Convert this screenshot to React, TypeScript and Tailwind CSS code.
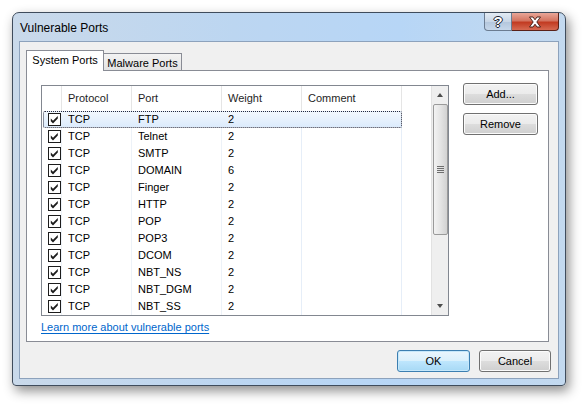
import React from "react";

const rows: [string, string][] = [
  ["FTP", "2"],
  ["Telnet", "2"],
  ["SMTP", "2"],
  ["DOMAIN", "6"],
  ["Finger", "2"],
  ["HTTP", "2"],
  ["POP", "2"],
  ["POP3", "2"],
  ["DCOM", "2"],
  ["NBT_NS", "2"],
  ["NBT_DGM", "2"],
  ["NBT_SS", "2"],
];

function Check() {
  return (
    <svg width="13" height="13" viewBox="0 0 13 13" className="shrink-0">
      <rect x="0.5" y="0.5" width="12" height="12" fill="#fff" stroke="#1c1c1c" />
      <path d="M2.8 5.6 L5 7.8 L9.8 3 L9.8 5.6 L5 10.4 L2.8 8.2 Z" fill="#1c1c1c" />
    </svg>
  );
}

function Btn({ children, primary, className = "" }: { children: React.ReactNode; primary?: boolean; className?: string }) {
  return (
    <button
      className={
        "h-[22px] rounded-[3px] border text-[11px] text-black " +
        (primary
          ? "border-[#3c7fb1] bg-[linear-gradient(#eaf6fd_0%,#d9f0fc_50%,#bee6fd_51%,#a7d9f5_100%)] shadow-[inset_0_0_0_1px_#c6e8fb] "
          : "border-[#707070] bg-[linear-gradient(#f2f2f2_0%,#ebebeb_50%,#dddddd_51%,#cfcfcf_100%)] shadow-[inset_0_0_0_1px_#fbfbfb] ") +
        className
      }
    >
      {children}
    </button>
  );
}

export default function App() {
  return (
    <div className="w-[586px] h-[406px] bg-white pt-[12px] pl-[12px] font-['Liberation_Sans',Arial,sans-serif] text-[11px] text-black overflow-hidden">
      {/* window */}
      <div className="w-[554px] h-[374px] flex flex-col rounded-t-[7px] rounded-b-[4px] border border-[#3f4c5c] bg-[linear-gradient(90deg,#c9d9ea_0%,#bcd6f1_40%,#b7d6f6_70%,#c3d9ef_100%)] shadow-[3px_5px_12px_rgba(0,0,0,0.45)]">
        {/* title bar */}
        <div className="h-[28px] flex items-start">
          <div className="pl-[7px] pt-[8px] text-[12px] leading-[14px]">Vulnerable Ports</div>
          <div className="ml-auto mr-[6px] flex">
            <div className="w-[28px] h-[18px] rounded-bl-[4px] border border-t-0 border-[#6b7c91] bg-[linear-gradient(#e3ebf4_0%,#c8d6e6_50%,#b3c6dc_51%,#c6d7ea_100%)] flex items-center justify-center">
              <span className="text-white font-bold text-[15px] leading-none [text-shadow:1px_0_0_#1a2230,-1px_0_0_#1a2230,0_1px_0_#1a2230,0_-1px_0_#1a2230]">?</span>
            </div>
            <div className="w-[47px] h-[18px] rounded-br-[4px] border border-t-0 border-l-0 border-[#5a2118] bg-[linear-gradient(#e8a698_0%,#d47561_45%,#c23b22_55%,#d66a52_100%)] flex items-center justify-center">
              <svg width="14" height="12" viewBox="0 0 14 12">
                <path d="M1.5 1 L5 1 L7 3.8 L9 1 L12.5 1 L8.8 6 L12.5 11 L9 11 L7 8.2 L5 11 L1.5 11 L5.2 6 Z" fill="#fff" stroke="#3b1610" strokeWidth="0.9" />
              </svg>
            </div>
          </div>
        </div>
        {/* client */}
        <div className="flex-1 px-[6px] pb-[6px] flex">
          <div className="flex-1 border border-[#8da2bc] bg-[#f0f0f0] flex flex-col">
            {/* tabs */}
            <div className="pt-[6px] pl-[6px] flex items-end h-[28px]">
              <div className="relative z-10 h-[21px] w-[78px] border border-b-0 border-[#898c95] bg-white flex items-start justify-center pt-[1px] -mb-[1px]">
                System Ports
              </div>
              <div className="h-[17px] w-[78px] border border-l-0 border-b-0 border-[#898c95] bg-[linear-gradient(#f3f3f3,#e3e3e3)] flex items-start justify-center pt-[1px]">
                Malware Ports
              </div>
            </div>
            {/* panel */}
            <div className="ml-[6px] mr-[9px] h-[272px] border border-[#898c95] bg-white pt-[14px] pl-[14px] flex flex-col">
              <div className="flex">
                {/* list view */}
                <div className="w-[408px] h-[231px] border border-[#828790] flex">
                  <div className="w-[389px] flex flex-col">
                    <div className="h-[25px] flex items-center text-[#1e1e1e]">
                      <div className="w-[20px] h-full border-r border-[#e5e5e5]" />
                      <div className="w-[70px] h-full border-r border-[#e5e5e5] pl-[6px] flex items-center">Protocol</div>
                      <div className="w-[90px] h-full border-r border-[#e5e5e5] pl-[6px] flex items-center">Port</div>
                      <div className="w-[80px] h-full border-r border-[#e5e5e5] pl-[6px] flex items-center">Weight</div>
                      <div className="w-[100px] h-full border-r border-[#e5e5e5] pl-[6px] flex items-center">Comment</div>
                      <div className="flex-1 h-full" />
                    </div>
                    <div className="flex-1 overflow-hidden relative">
                      {/* column gridlines */}
                      <div className="absolute inset-0 flex pointer-events-none">
                        <div className="w-[20px] border-r border-[#edf2f8]" />
                        <div className="w-[70px] border-r border-[#edf2f8]" />
                        <div className="w-[90px] border-r border-[#edf2f8]" />
                        <div className="w-[80px] border-r border-[#e6eef8]" />
                        <div className="w-[100px] border-r border-[#e6eef8]" />
                      </div>
                      {rows.map(([port, w], i) => (
                        <div key={port} className="relative h-[17px] flex items-center">
                          {i === 0 && (
                            <div className="absolute left-[1px] top-0 w-[359px] h-[17px] rounded-[2px] border border-dotted border-[#2a2a3a] bg-[linear-gradient(#f2f8fe,#dcebfc)]" />
                          )}
                          <div className="relative w-[20px] flex justify-end pr-[1px]">
                            <Check />
                          </div>
                          <div className="relative w-[70px] pl-[6px]">TCP</div>
                          <div className="relative w-[90px] pl-[6px]">{port}</div>
                          <div className="relative w-[80px] pl-[6px]">{w}</div>
                        </div>
                      ))}
                    </div>
                  </div>
                  {/* scrollbar */}
                  <div className="w-[17px] bg-[#efefef] border-l border-[#e2e2e2] flex flex-col items-center">
                    <div className="h-[18px] flex items-center justify-center">
                      <div className="w-0 h-0 border-l-[3.5px] border-r-[3.5px] border-b-[4px] border-l-transparent border-r-transparent border-b-[#4d4d4d]" />
                    </div>
                    <div className="w-[15px] h-[131px] rounded-[2px] border border-[#9a9a9a] bg-[linear-gradient(90deg,#f3f3f3,#e4e4e4_50%,#d2d2d2)] flex items-center justify-center">
                      <div className="flex flex-col gap-[1px]">
                        <div className="w-[7px] h-[1px] bg-[#6e6e6e]" />
                        <div className="w-[7px] h-[1px] bg-[#6e6e6e]" />
                        <div className="w-[7px] h-[1px] bg-[#6e6e6e]" />
                        <div className="w-[7px] h-[1px] bg-[#6e6e6e]" />
                      </div>
                    </div>
                    <div className="flex-1" />
                    <div className="h-[18px] flex items-center justify-center">
                      <div className="w-0 h-0 border-l-[3.5px] border-r-[3.5px] border-t-[4px] border-l-transparent border-r-transparent border-t-[#4d4d4d]" />
                    </div>
                  </div>
                </div>
                {/* side buttons */}
                <div className="ml-[14px] flex flex-col gap-[8px] -mt-[2px]">
                  <Btn className="w-[75px]">Add...</Btn>
                  <Btn className="w-[75px]">Remove</Btn>
                </div>
              </div>
              <div className="mt-[5px] leading-[13px]">
                <a className="text-[#0066cc] underline underline-offset-[2px]">Learn more about vulnerable ports</a>
              </div>
            </div>
            {/* bottom buttons */}
            <div className="flex justify-end gap-[9px] mt-[8px] mr-[7px]">
              <Btn primary className="w-[73px]">OK</Btn>
              <Btn className="w-[72px]">Cancel</Btn>
            </div>
          </div>
        </div>
      </div>
    </div>
  );
}
